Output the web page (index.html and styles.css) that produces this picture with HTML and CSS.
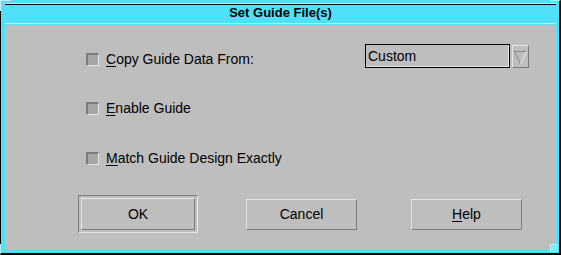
FILE: index.html
```html
<!DOCTYPE html>
<html lang="en">
<head>
  <meta charset="UTF-8" />
  <title>Set Guide File(s)</title>
  <link rel="stylesheet" href="styles.css">
</head>
<body>
  <div class="window">
    <span class="corner corner-tl"></span>
    <span class="corner corner-tr"></span>
    <span class="corner corner-bl"></span>
    <span class="corner corner-br"></span>

    <div class="titlebar">Set Guide File(s)</div>

    <div class="panel">
      <div class="row row-copy">
        <label class="check"><span class="box"></span><span><u>C</u>opy Guide Data From:</span></label>
        <div class="combo">
          <div class="combo-field">Custom</div>
          <div class="combo-arrow">
            <svg width="15" height="21" viewBox="0 0 15 21">
              <polygon points="1.5,5.5 13.5,5.5 7.5,18" fill="#bebebe" />
              <line x1="1.5" y1="5.5" x2="13.5" y2="5.5" stroke="#8a8a8a" />
              <line x1="1.5" y1="5.5" x2="7.5" y2="18" stroke="#8a8a8a" />
              <line x1="13.5" y1="5.5" x2="7.5" y2="18" stroke="#e6e6e6" />
            </svg>
          </div>
        </div>
      </div>

      <div class="row row-enable">
        <label class="check"><span class="box"></span><span><u>E</u>nable Guide</span></label>
      </div>

      <div class="row row-match">
        <label class="check"><span class="box"></span><span><u>M</u>atch Guide Design Exactly</span></label>
      </div>

      <div class="buttons">
        <div class="default-ring"><button class="btn">OK</button></div>
        <button class="btn">Cancel</button>
        <button class="btn btn-help"><u>H</u>elp</button>
      </div>
    </div>
  </div>
</body>
</html>
```

FILE: styles.css
```css
* {
  box-sizing: border-box;
}

body {
  margin: 0;
  background: #000;
  font-family: 'Liberation Sans', Arial, sans-serif;
  color: #000;
}

.window {
  position: relative;
  width: 561px;
  height: 255px;
  background: #4fe1f9;
  border-left: 1px solid #000;
  border-right: 2px solid #000;
  border-bottom: 2px solid #000;
  padding: 3px 3px 3px 4px;
  display: flex;
  flex-direction: column;
}

.corner {
  position: absolute;
  width: 11px;
  height: 11px;
}

.corner-tl {
  top: 0;
  left: -1px;
  border-top: 1px solid #b4f3fc;
  border-left: 1px solid #b4f3fc;
}

.corner-tr {
  top: 0;
  right: -2px;
  border-top: 1px solid #b4f3fc;
  border-right: 2px solid #000;
}

.corner-bl {
  bottom: -2px;
  left: -1px;
  border-left: 1px solid #b4f3fc;
  border-bottom: 2px solid #000;
}

.corner-br {
  bottom: 1px;
  right: 1px;
  width: 8px;
  height: 8px;
  border-top: 1px solid #b4f3fc;
  border-left: 1px solid #b4f3fc;
  background: #7fe9fb;
}

.titlebar {
  height: 21px;
  margin-bottom: 1px;
  border-top: 1px solid #b4f3fc;
  border-bottom: 1px solid #b4f3fc;
  box-shadow: inset 0 1px 0 #000;
  padding-top: 1px;
  font-size: 13px;
  font-weight: bold;
  line-height: 16px;
  text-align: center;
}

.panel {
  flex: 1;
  background: #bebebe;
  padding: 19px 27px 0 81px;
}

.row {
  display: flex;
  align-items: flex-start;
}

.row-copy {
  height: 24px;
}

.row-enable {
  margin-top: 34px;
}

.row-match {
  margin-top: 37px;
}

.check {
  display: flex;
  align-items: center;
  gap: 7px;
  height: 13px;
  font-size: 14px;
  line-height: 13px;
}

.row-copy .check {
  margin-top: 9px;
}

.box {
  width: 13px;
  height: 13px;
  background: #a6a6a6;
  border-style: solid;
  border-width: 2px 1px 1px 2px;
  border-color: #7b7b7b #e6e6e6 #e6e6e6 #7b7b7b;
}

u {
  text-decoration-thickness: 1px;
  text-underline-offset: 2px;
}

.combo {
  margin-left: auto;
  display: flex;
  align-items: flex-start;
  gap: 2px;
}

.combo-field {
  width: 145px;
  height: 24px;
  border: 1px solid #000;
  box-shadow: inset -1px -1px 0 #e6e6e6;
  padding-left: 2px;
  font-size: 14px;
  line-height: 22px;
}

.combo-arrow {
  width: 17px;
  height: 23px;
  margin-top: 1px;
  border: 1px solid;
  border-color: #e6e6e6 #7b7b7b #7b7b7b #e6e6e6;
}

.combo-arrow svg {
  display: block;
}

.buttons {
  display: flex;
  align-items: center;
  gap: 48px;
  margin-top: 30px;
  margin-left: -8px;
}

.default-ring {
  width: 120px;
  height: 38px;
  padding: 2px;
  border: 1px solid;
  border-color: #7b7b7b #e6e6e6 #e6e6e6 #7b7b7b;
}

.btn {
  width: 111px;
  height: 31px;
  padding: 0;
  background: #bebebe;
  border: 1px solid;
  border-color: #e6e6e6 #7b7b7b #7b7b7b #e6e6e6;
  font-family: 'Liberation Sans', Arial, sans-serif;
  font-size: 14px;
  color: #000;
}

.default-ring .btn {
  width: 100%;
  height: 100%;
}

.btn-help {
  margin-left: 6px;
}
```
